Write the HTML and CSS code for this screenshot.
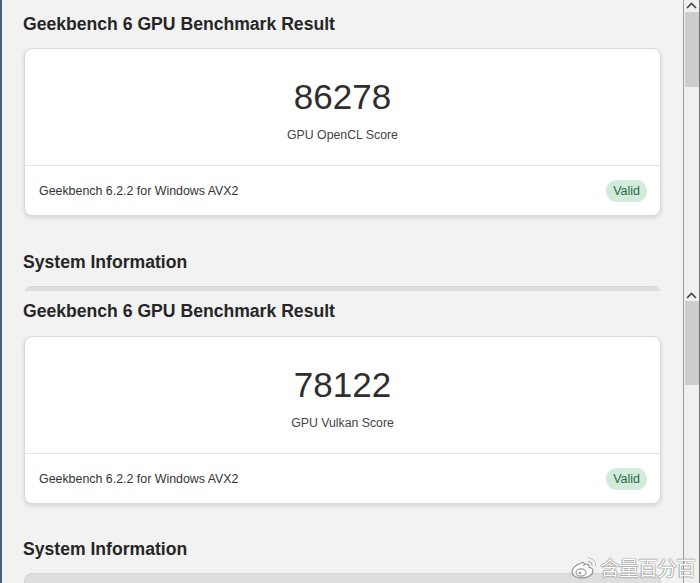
FILE: index.html
```html
<!DOCTYPE html>
<html lang="en">
<head>
    <meta charset="UTF-8">
    <meta name="viewport" content="width=device-width, initial-scale=1.0">
    <title>Geekbench 6 GPU Benchmark Result</title>
    <link rel="stylesheet" href="styles.css">
</head>
<body>
    <!-- 第一张截图: OpenCL -->
    <div class="shot shot-a">
        <main class="page">
            <h2 class="section-title">Geekbench 6 GPU Benchmark Result</h2>
            <div class="card result">
                <div class="score-box">
                    <div class="score">86278</div>
                    <div class="score-label">GPU OpenCL Score</div>
                </div>
                <div class="card-footer">
                    <span>Geekbench 6.2.2 for Windows AVX2</span>
                    <span class="badge">Valid</span>
                </div>
            </div>
            <h2 class="section-title info-title">System Information</h2>
            <div class="card info"></div>
        </main>
        <div class="scrollbar">
            <div class="arrow">
                <svg width="11" height="7" viewBox="0 0 11 7"><path d="M1 6 L5.5 1.5 L10 6" fill="none" stroke="#444" stroke-width="1.6"/></svg>
            </div>
            <div class="thumb"></div>
        </div>
    </div>

    <!-- 第二张截图: Vulkan -->
    <div class="shot shot-b">
        <main class="page">
            <h2 class="section-title">Geekbench 6 GPU Benchmark Result</h2>
            <div class="card result">
                <div class="score-box">
                    <div class="score">78122</div>
                    <div class="score-label">GPU Vulkan Score</div>
                </div>
                <div class="card-footer">
                    <span>Geekbench 6.2.2 for Windows AVX2</span>
                    <span class="badge">Valid</span>
                </div>
            </div>
            <h2 class="section-title info-title">System Information</h2>
            <div class="card info"></div>
        </main>
        <div class="scrollbar">
            <div class="arrow">
                <svg width="11" height="7" viewBox="0 0 11 7"><path d="M1 6 L5.5 1.5 L10 6" fill="none" stroke="#444" stroke-width="1.6"/></svg>
            </div>
            <div class="thumb"></div>
        </div>
    </div>

    <div class="watermark">
        <svg width="28" height="24" viewBox="0 0 28 24">
            <path d="M11 7 C5 9 2 13 2 16 C2 20 7 22 12 22 C19 22 23 18 23 15 C23 12 20 11 19 12 C20 9 18 7 14 9 C15 6 13 6 11 7 Z" fill="#fff" stroke="#999" stroke-width="1.3"/>
            <ellipse cx="11" cy="16.5" rx="5" ry="3.6" fill="none" stroke="#999" stroke-width="1.2"/>
            <circle cx="10" cy="17" r="1.3" fill="#999"/>
            <path d="M18 2 C22 2 26 5 25.5 10" fill="none" stroke="#fff" stroke-width="2.4"/>
            <path d="M18 2 C22 2 26 5 25.5 10" fill="none" stroke="#999" stroke-width="0.8"/>
            <path d="M18 5.5 C20.5 5.5 22.5 7.5 22 9.5" fill="none" stroke="#999" stroke-width="1"/>
        </svg>
        <span>含量百分百</span>
    </div>
</body>
</html>
```

FILE: styles.css
```css
/* Geekbench 结果页截图 */
:root {
    --bg: #f2f2f2;
    --text: #2b2b2b;
    --muted: #444;
    --border: #d9d9d9;
    --badge-bg: #d2ebda;
    --badge-text: #2f6a44;
}
body {
    margin: 0;
    padding: 0;
    font-family: "Liberation Sans", Arial, sans-serif;
    background-color: var(--bg);
    color: var(--text);
    width: 700px;
    height: 583px;
    overflow: hidden;
    position: relative;
}
.shot {
    display: flex;
    overflow: hidden;
    border-left: 2px solid #4c5f7e;
}
.shot-a {
    height: 291px;
}
.shot-b {
    height: 292px;
}
.page {
    flex: 1;
    padding: 13px 22px 0 22px;
}
.shot-b .page {
    padding-top: 9px;
}
.section-title {
    font-size: 17.6px;
    line-height: 22px;
    font-weight: bold;
    margin: 0 0 13px -1px;
    color: #262626;
}
.shot-b .section-title {
    margin-bottom: 14px;
}
.info-title {
    margin-top: 35px;
}
.shot-b .info-title {
    margin-top: 34px;
    margin-bottom: 13px;
}
.card {
    background-color: #ffffff;
    border: 1px solid var(--border);
    border-radius: 8px;
    box-shadow: 0 2px 4px rgba(0, 0, 0, 0.12);
}
.result {
    height: 166px;
    display: flex;
    flex-direction: column;
}
.score-box {
    height: 117px;
    text-align: center;
    border-bottom: 1px solid #e2e2e2;
    box-sizing: border-box;
    padding-top: 28px;
}
.score {
    font-size: 35px;
    line-height: 40px;
    color: #2e2e2e;
}
.score-label {
    font-size: 12.3px;
    line-height: 16px;
    margin-top: 10px;
    color: var(--muted);
}
.card-footer {
    flex: 1;
    display: flex;
    align-items: center;
    justify-content: space-between;
    padding: 0 13px 0 14px;
    font-size: 12.4px;
    color: #333;
}
.badge {
    background-color: var(--badge-bg);
    color: var(--badge-text);
    border-radius: 11px;
    padding: 0 7px;
    height: 22px;
    line-height: 22px;
    font-size: 12.5px;
}
.info {
    height: 40px;
    background-color: #dedede;
    border-color: #d6d6d6;
    border-radius: 8px 8px 0 0;
    box-shadow: none;
}
.scrollbar {
    width: 15px;
    border-left: 1px solid #9c9c9c;
    border-right: 1px solid #6f7785;
    background-color: #f0f0f0;
    display: flex;
    flex-direction: column;
    align-items: center;
}
.arrow {
    height: 11px;
    display: flex;
    align-items: center;
    justify-content: center;
}
.thumb {
    width: 14px;
    height: 75px;
    margin-top: 1px;
    background-color: #cdcdcd;
}
.shot-b .arrow {
    height: 9px;
}
.shot-b .thumb {
    height: 84px;
}
.watermark {
    position: absolute;
    left: 570px;
    top: 553px;
    display: flex;
    align-items: center;
    gap: 2px;
}
.watermark span {
    font-family: "Noto Sans CJK SC", sans-serif;
    font-size: 20px;
    letter-spacing: -1px;
    color: #ffffff;
    text-shadow: 0 0 1px #777, 0 0 1px #777, 0 0 1px #777;
}
```
